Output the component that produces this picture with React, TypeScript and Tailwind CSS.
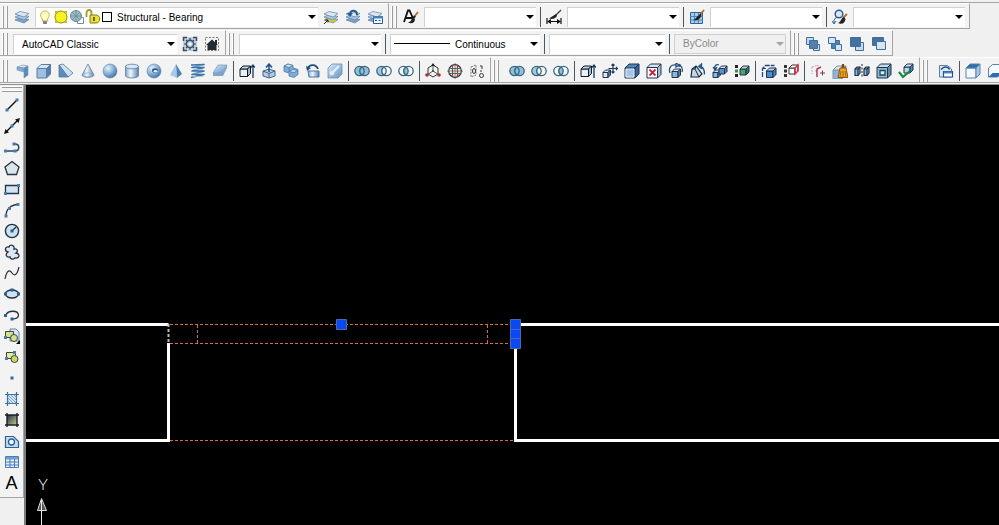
import type { ReactNode } from "react";
import clsx from "clsx";

const NAVY = "#1f3552";
const STEEL = "#4f7ba8";

interface BoxProps {
  x: number;
  y: number;
  s: number;
  d: number;
  front?: string;
  top?: string;
  side?: string;
  stroke?: string;
}

// box in cabinet projection, s = face size, d = depth
const Box = ({
  x,
  y,
  s,
  d,
  front = "#8fb4da",
  top = "#d5e5f4",
  side = "#5580ad",
  stroke = NAVY,
}: BoxProps) => (
  <g stroke={stroke} strokeLinejoin="round">
    <path d={`M${x} ${y + d}h${s}v${s}h${-s}z`} fill={front} />
    <path d={`M${x} ${y + d}l${d} ${-d}h${s}l${-d} ${d}z`} fill={top} />
    <path d={`M${x + s} ${y + d}l${d} ${-d}v${s}l${-d} ${d}z`} fill={side} />
  </g>
);

const Rings = ({ left, mid, right }: { left: string; mid: string; right: string }) => (
  <g stroke="#39677f" strokeWidth="1.3">
    <circle cx="5.5" cy="8" r="4.7" fill={left} />
    <circle cx="10.5" cy="8" r="4.7" fill={right} />
    <path d="M8 4a4.7 4.7 0 0 1 0 8a4.7 4.7 0 0 1 0-8z" fill={mid} />
  </g>
);

const Sheets = ({ last = "#7da2c8" }: { last?: string }) => (
  <g stroke="#5d81a6" strokeWidth=".7">
    <path d="M1 11l5-2.5 9 2-5 3.5z" fill={last} />
    <path d="M1 8l5-2.5 9 2-5 3.5z" fill="#a9c4de" />
    <path d="M1 5l5-2.5 9 2-5 3.5z" fill="#dbe8f4" />
  </g>
);

const Brush = () => (
  <>
    <path d="M15 3L11 8" stroke="#b06a35" strokeWidth="1.8" />
    <path d="M12 7l-2 2.5" stroke="#222" strokeWidth="2.2" />
    <path d="M10 8.500c-2 1-1 4-5 5c3 1.500 7 .5 7-3z" fill="#222" />
  </>
);

const icons: Record<string, ReactNode> = {
  layers: <Sheets />,
  makeCurrent: (
    <>
      <Sheets last="#d8cf32" />
      <path d="M1 15l4-4M2.500 11H5v2.500" stroke="#222" />
    </>
  ),
  layerPrevious: (
    <>
      <Sheets />
      <path d="M12 6C12 1 6 0 5 5" stroke="#275f96" strokeWidth="2" />
      <path d="M2 4h6L5 8z" fill="#275f96" />
    </>
  ),
  layerStates: (
    <>
      <Sheets />
      <path d="M6.500 7.500h9v7h-9z" fill="#fff" stroke="#245b94" />
      <path d="M6 7h10v2.500H6z" fill="#3f7fc0" />
      <path d="M8 11.500h2M11.500 11.500h2" stroke="#245b94" />
    </>
  ),
  textStyle: (
    <>
      <path d="M1 13L5 1.500h1.500l4 9M2.500 9H9" stroke="#111" strokeWidth="1.800" />
      <Brush />
    </>
  ),
  dimStyle: (
    <>
      <path d="M1 9v6M15 9v6M2 12.500h12" stroke="#111" strokeWidth="1.2" />
      <path d="M5 10v5l-4-2.500zM11 10v5l4-2.500z" fill="#111" />
      <path d="M15 1L9 7" stroke="#444" strokeWidth="1.500" />
      <path d="M10 5L3 9.500c3 1 6 .5 8-2.500z" fill="#222" />
    </>
  ),
  tableStyle: (
    <>
      <path d="M1.500 3.500h12v11h-12z" fill="#a9cbea" stroke="#2d62a0" />
      <path d="M1 7.500h13M1 11h13M5.500 4v10M9.500 4v10" stroke="#4e82bb" />
      <path d="M15 1l-4 5" stroke="#b06a35" strokeWidth="1.800" />
      <path d="M11.500 4.500L9 7c-2 1-2 3-4.500 4c4 1 7-1 8-5z" fill="#222" />
    </>
  ),
  leaderStyle: (
    <>
      <circle cx="7" cy="5" r="3.800" fill="#d8e8f7" stroke="#2e5f94" strokeWidth="1.500" />
      <path d="M4.500 8L2 11v3M0 12l2 3 2-3" stroke="#2e5f94" />
      <path d="M15 5l-4 4" stroke="#b06a35" strokeWidth="1.800" />
      <path d="M12 8c-3 1-3 5-6 6c4 2 7 0 7.500-4z" fill="#222" />
    </>
  ),
  workspaceSettings: (
    <>
      <path d="M1 1h14v14H1z" fill="#c3d0dc" />
      <path d="M1.500 5V1.500H5M11 1.500h3.500V5M14.500 11v3.500H11M5 14.500H1.500V11" stroke="#3b4c5d" strokeWidth="1.500" />
      <circle cx="8" cy="8" r="3.700" fill="#b8cad9" stroke="#3b5068" strokeWidth="1.400" />
      <path d="M8 2v3M8 11v3M2 8h3M11 8h3M4 4l2 2M10 10l2 2M12 4l-2 2M6 10l-2 2" stroke="#3b5068" strokeWidth="1.200" />
      <circle cx="8" cy="8" r="1.500" fill="#fff" />
    </>
  ),
  myWorkspace: (
    <>
      <path d="M1.500 1.500h13v13h-13z" stroke="#777" strokeDasharray="2 1.500" />
      <path d="M2 9l6-5.500L14 9h-1.500v5h-9V9z" fill="#252b33" />
      <path d="M11 4h2v4h-2z" fill="#252b33" />
    </>
  ),
  bringFront: (
    <g stroke="#3f6f9e">
      <path d="M1.500 1.500h7v7h-7zM8.500 8.500h6v6h-6z" fill="#c6daec" />
      <path d="M4.500 4.500h8v8h-8z" fill="#527fab" />
    </g>
  ),
  sendBack: (
    <g stroke="#3f6f9e">
      <path d="M4.500 4.500h8v8h-8z" fill="#527fab" />
      <path d="M1.500 1.500h7v6h-7zM8.500 8.500h6v6h-6z" fill="#d6e5f3" />
    </g>
  ),
  bringAbove: (
    <g stroke="#3f6f9e">
      <path d="M6.500 6.500h8v8h-8z" fill="#c6daec" />
      <path d="M1.500 1.500h10v9h-10z" fill="#44719f" />
    </g>
  ),
  sendUnder: (
    <g stroke="#3f6f9e">
      <path d="M1.500 1.500h11v8h-11z" fill="#44719f" />
      <path d="M5.500 5.500h9v8h-9z" fill="#d6e5f3" />
    </g>
  ),
  polysolid: (
    <g stroke="#6f94ba" strokeWidth=".6">
      <path d="M3 4l6-2 5 1-4 2z" fill="#dbe8f4" />
      <path d="M3 4l7 1v4L8 8.500 3 7z" fill="#83aad2" />
      <path d="M10 5l4-2v9l-4 3z" fill="#5a8aba" />
    </g>
  ),
  box: <Box x={1} y={1.5} s={9.5} d={4} front="#9dbfe2" stroke="#5b7d9f" />,
  wedge: (
    <g stroke="#56789a" strokeWidth=".8">
      <path d="M1 2l4-1 10 9-5 4z" fill="#cfe0f0" />
      <path d="M1 2l9 12H1z" fill="#5c8dc0" />
    </g>
  ),
  cone: (
    <>
      <path d="M8 1l6 11c-1 3-11 3-12 0z" fill="url(#metal)" stroke="#697c90" strokeWidth=".8" />
      <ellipse cx="8" cy="12" rx="6" ry="2" stroke="#8aa0b6" strokeWidth=".6" />
    </>
  ),
  sphere: <circle cx="8" cy="8" r="7" fill="url(#ball)" stroke="#5d83ab" strokeWidth=".6" />,
  cylinder: (
    <>
      <path d="M1.500 3v10c1 2.500 12 2.500 13 0V3z" fill="url(#metal)" stroke="#587ca3" strokeWidth=".8" />
      <ellipse cx="8" cy="3.500" rx="6.500" ry="2.300" fill="#d9e8f6" stroke="#587ca3" strokeWidth=".8" />
    </>
  ),
  torus: (
    <>
      <circle cx="8" cy="8" r="7" fill="url(#ball)" stroke="#5d83ab" strokeWidth=".6" />
      <ellipse cx="9" cy="7.500" rx="3" ry="2.300" fill="#2f5884" />
      <ellipse cx="9.500" cy="8.300" rx="2" ry="1.300" fill="#dfeaf5" />
    </>
  ),
  pyramid: (
    <>
      <path d="M8 1L2 12l7 3z" fill="#a9c9e9" />
      <path d="M8 1l6 10-5 4z" fill="#4d82b9" />
    </>
  ),
  helix: (
    <>
      <path d="M1 2l13-.5-12 3 12 0-12 3.500 12 0-12 3.500 12 0L1 14.500" stroke="#3f74a9" strokeWidth="1.700" strokeLinejoin="round" />
      <path d="M3 3h10M3 6.500h10M3 10h10M3 13.500h10" stroke="#a9c8e5" strokeWidth=".8" />
    </>
  ),
  planar: (
    <>
      <path d="M6 2h9l-4 8H1z" fill="url(#sheen)" stroke="#7595b5" strokeWidth=".7" />
      <path d="M1 10h10v3H1zM11 10l4-8v3l-4 8z" fill="#7fa3c9" />
    </>
  ),
  extrude: (
    <>
      <Box x={1} y={3} s={7.5} d={3} front="#e8f0f8" top="#bcd1e5" side="#9ab9d7" stroke="#111c29" />
      <path d="M14 15V2M12 4.500L14 2l2 2.500" stroke="#183b62" strokeWidth="1.300" />
    </>
  ),
  presspull: (
    <>
      <path d="M2 8l6-2 6 2v5l-6 2-6-2z" fill="#b5cce2" stroke="#3f658c" />
      <path d="M2 8l6 2.500L14 8M8 10.500V15" stroke="#3f658c" />
      <path d="M8 9V2M5 4.500L8 1l3 3.500" stroke="#1f4f84" strokeWidth="1.500" />
    </>
  ),
  sweep: (
    <g stroke="#4d7aa8" strokeWidth=".8">
      <path d="M1 3l4-2 5 1.500v2.500l5 1.500v5l-4 3-5-1.500V10L1 8.500z" fill="#7fabd8" />
      <path d="M1 3l4-2 5 1.500-4 2zM6 8.500l4-2 5 1-4 2z" fill="#d3e4f4" />
      <path d="M6 4.500V9" />
    </g>
  ),
  revolve: (
    <>
      <path d="M3 8h11v6H4z" fill="url(#metal)" stroke="#4d7aa8" />
      <path d="M13 6C11 1 5 1 3 5" stroke="#204d7d" strokeWidth="1.800" />
      <path d="M1 3l1 5 4-3z" fill="#204d7d" />
    </>
  ),
  loft: (
    <>
      <path d="M1 5l4-4h10v10l-4 4H1z" fill="url(#sheen)" stroke="#6991b9" strokeWidth=".8" />
      <path d="M6 9l6-6" stroke="#e9f3fc" strokeWidth="2" />
      <circle cx="5" cy="10" r="2.300" fill="#e2eef9" />
    </>
  ),
  union: <Rings left="#8fc1dc" mid="#8fc1dc" right="#8fc1dc" />,
  subtract: <Rings left="#9fcbe2" mid="#f4f7fa" right="#f4f7fa" />,
  intersect: <Rings left="#f4f7fa" mid="#8fc1dc" right="#f4f7fa" />,
  gizmoMove: (
    <>
      <path d="M3 5l5-3 5 3v6l-5 3-5-3z" stroke="#333" />
      <path d="M8 8V1M8 8l-6 4M8 8l6 4" stroke="#555" />
      <path d="M8 0l2 3H6z" fill="#222" />
      <circle cx="2" cy="12" r="1.800" fill="#a33" />
      <circle cx="14" cy="12" r="1.800" fill="#a33" />
      <path d="M7 7h2v2H7z" fill="#2f6b3c" />
    </>
  ),
  gizmoRotate: (
    <>
      <circle cx="8" cy="8" r="6.300" stroke="#333" strokeWidth="1.200" />
      <path d="M5.500 2.500v11M10.500 2.500v11" stroke="#a43b44" strokeWidth="1.200" />
      <path d="M2.500 5.500h11M2.500 10.500h11" stroke="#3e7450" strokeWidth="1.200" />
      <path d="M8 0v16M0 8h16" stroke="#555" strokeWidth=".7" />
    </>
  ),
  align3d: (
    <>
      <path d="M2 4l5-2v10l-5 2z" stroke="#777" strokeDasharray="2 1" />
      <ellipse cx="5" cy="8" rx="1.500" ry="2.500" stroke="#333" />
      <path d="M11 3h2v3M11 8h2" stroke="#333" />
      <circle cx="12.500" cy="12.500" r="2" stroke="#333" />
    </>
  ),
  moveFaces: (
    <>
      <Box x={1} y={7} s={5} d={2.5} front="#dce8f4" />
      <path d="M11 1v9M6.500 5.500h9M9.500 2.500L11 1l1.500 1.500M9.500 8.500L11 10l1.500-1.500M14 4l1.500 1.500L14 7" stroke="#1d3a5c" strokeWidth="1.200" />
    </>
  ),
  offsetFaces: (
    <>
      <Box x={1} y={1} s={10} d={4} front="#a5c4e4" top="#4f86bd" side="#35659a" />
      <path d="M2 6h8v8H2z" stroke="#e3eef8" />
    </>
  ),
  deleteFaces: (
    <>
      <Box x={1} y={1} s={10.5} d={3.5} front="#fff" top="#d8e3ee" side="#a7bdd3" />
      <path d="M3.500 6.500l6 6M9.500 6.500l-6 6" stroke="#c5283d" strokeWidth="1.800" />
    </>
  ),
  rotateFaces: (
    <>
      <Box x={4} y={6} s={6} d={2.5} />
      <path d="M2 10C0 4 4 1 8 2M14 9c1-3 0-5-2-7M8 0v4l3-2zM12 1l-1 3" stroke="#24507e" strokeWidth="1.300" />
    </>
  ),
  taperFaces: (
    <>
      <path d="M1 14l1-8 4-3 6 8-3 3z" fill="#c2d7eb" stroke="#17283c" strokeWidth="1.200" />
      <path d="M2 6l3 0 4 8M5 6l1-3" stroke="#17283c" />
      <path d="M9.500 3.500c3 0 5 3 5 8M8.500 3.500l3-2.500v4.500z" stroke="#285887" strokeWidth="1.400" />
    </>
  ),
  copyFaces: (
    <>
      <Box x={1} y={7} s={5} d={2.5} />
      <Box x={7} y={3} s={5.5} d={2.5} front="#5f91c4" />
      <path d="M7 2C4 1 2 3 3 6M1 4l2 3 2-3" stroke="#1d4a7a" strokeWidth="1.300" />
    </>
  ),
  colorFaces: (
    <>
      <path d="M1 2h3v3H1z" fill="#222" />
      <path d="M1 6.500h3v3H1z" fill="#3c8a4e" />
      <path d="M1 11h3v3H1z" fill="#222" />
      <Box x={6} y={3} s={6} d={3} front="#4da568" top="#bcdcc5" side="#2e7a48" />
    </>
  ),
  copyEdges: (
    <>
      <Box x={5.5} y={5} s={6.5} d={3} front="#4b8ccc" top="#bed7ef" />
      <path d="M1.500 14V5.500l3-3h9" stroke="#1b4a80" strokeDasharray="5 1" strokeWidth="1.300" />
      <path d="M1 5.500h4" stroke="#1b4a80" />
    </>
  ),
  colorEdges: (
    <>
      <path d="M1 2h3v3H1zM1 6.500h3v3H1zM1 11h3v3H1z" fill="#333" />
      <Box x={6} y={2} s={6} d={3} front="#fff" top="#fff" side="#fbe3e6" stroke="#333" />
      <path d="M12 5v6l3-3V2z" stroke="#d0334a" strokeWidth="1.400" />
    </>
  ),
  imprint: (
    <>
      <path d="M2 4l6-2v4M2 4v7M5 8h3" stroke="#c9a5b4" strokeDasharray="2 1" />
      <path d="M7 14V6l4-2" stroke="#a93a5c" strokeWidth="1.500" />
      <path d="M10 10h5M12.500 7.500v5" stroke="#7a3c55" />
    </>
  ),
  clean: (
    <>
      <Box x={1} y={3} s={9} d={4} stroke="#7d93aa" />
      <path d="M10 1h2l.5 4h-3z" fill="#7a4a12" />
      <path d="M8 5h6l2 9.500H6z" fill="#efa528" stroke="#91560e" />
      <path d="M9 8l-1 6M11 8v6M13 8l1 6" stroke="#a8650f" />
    </>
  ),
  separate: (
    <>
      <g stroke={NAVY} strokeWidth="1.200">
        <path d="M1 6l2-2h3v6l-2 2.500H1z" fill="#8fb4cc" />
        <path d="M1 6h3v6.500M4 6l2-2" />
        <path d="M10 6l2-2h3v6l-2 2.500h-3z" fill="#8fb4cc" />
        <path d="M10 6h3v6.500M13 6l2-2" />
      </g>
      <path d="M8 1v14" stroke="#222" strokeDasharray="2 1.500" />
    </>
  ),
  shell: (
    <>
      <Box x={1} y={1} s={10.5} d={3.5} front="#93b9ce" top="#c4dce8" side="#5f8ba4" />
      <path d="M4 7.500h5v4.500H4z" fill="#dcebf3" stroke="#1f4860" strokeWidth="1.300" />
    </>
  ),
  check: (
    <>
      <Box x={6} y={1} s={6} d={3} front="#b7d5e2" />
      <path d="M1 9l4 5 7-6" stroke="#158a3e" strokeWidth="2.200" />
    </>
  ),
  namedViews: (
    <>
      <path d="M1.500 14V2.500h8l4 3.500v8z" fill="#dce8f3" stroke="#5b7da0" />
      <path d="M3 6.500C6 3 10 3 11.500 6.500" stroke="#24507e" strokeWidth="1.500" />
      <path d="M5.500 8.500h9v5.500h-9z" fill="#fff" stroke="#1d5793" strokeWidth="1.200" />
      <path d="M6 8.500h8v2H6z" fill="#4b86c0" />
    </>
  ),
  topView: <Box x={1} y={1} s={10} d={4} front="#f5f9fc" top="#2d6db0" side="#a8c7e6" stroke="#5a83ac" />,
  bottomView: (
    <>
      <path d="M1.500 5l4-3.500h9V10l-4 4h-9z" fill="#f5f9fc" stroke="#5a83ac" />
      <path d="M1.500 14l4-4h9l-4 4z" fill="#2d6db0" />
    </>
  ),
  line: (
    <>
      <path d="M3 13L13 3" stroke="#111" strokeWidth="1.400" />
      <path d="M1.500 11.500h3v3h-3zM11.500 1.500h3v3h-3z" fill={STEEL} />
    </>
  ),
  xline: (
    <>
      <path d="M2 14L14 2" stroke="#111" strokeWidth="1.400" />
      <path d="M0 16l1.500-5L5 14.500zM16 0l-5 1.500L14.500 5z" fill="#111" />
      <path d="M6.500 6.500h3v3h-3z" fill={STEEL} />
    </>
  ),
  pline: (
    <>
      <path d="M2 12h9c5 0 5-7 0-7" stroke="#24476d" strokeWidth="1.500" />
      <path d="M0 10.500h3v3H0zM9.500 10.500h3v3h-3zM8.500 3.500h3v3h-3z" fill={STEEL} />
    </>
  ),
  polygon: <path d="M8 1.500L15 7l-2.500 7.500h-9L1 7z" fill="#d9e7ec" stroke="#28333f" strokeWidth="1.300" />,
  rectangle: (
    <>
      <path d="M1.500 4.500h13v8h-13z" fill="#d3e3f0" stroke="#1f3552" strokeWidth="1.300" />
      <path d="M0 11h3v3H0zM13 3h3v3h-3z" fill={STEEL} />
    </>
  ),
  arc: (
    <>
      <path d="M2 14C2 7 7 3 14 2.500" stroke="#222f3f" strokeWidth="1.300" />
      <path d="M.5 12.500h3v3h-3zM4 5h3v3H4zM12.500 1h3v3h-3z" fill={STEEL} />
    </>
  ),
  circle: (
    <>
      <circle cx="8" cy="8" r="6.600" fill="#cbe2f5" stroke="#26313d" strokeWidth="1.400" />
      <path d="M8 8l4-4" stroke="#26313d" strokeWidth="1.200" />
      <path d="M6.500 6.500h3v3h-3z" fill="#24609a" />
    </>
  ),
  revcloud: (
    <path
      d="M4 8C0 7 1 2 5 3c1-3 6-2 5 2 4-1 4 3 2 4 5 1 3 6-1 5-2 2-5 1-5-1-4 1-5-3-2-5z"
      fill="#dbe8f2"
      stroke="#28333f"
      strokeWidth="1.300"
    />
  ),
  spline: <path d="M1 14C3 4 6 5 8 8s5 3 7-6" stroke="#28333f" strokeWidth="1.200" />,
  ellipse: (
    <>
      <ellipse cx="8" cy="8" rx="6.500" ry="4" fill="#cbe2f5" stroke="#26313d" strokeWidth="1.300" />
      <path d="M0 6.500h3v3H0zM13 6.500h3v3h-3zM6.500 2.500h3v3h-3z" fill="#2b5f94" />
    </>
  ),
  ellipseArc: (
    <>
      <path d="M2 8c2-5 12-5 12.500 0 0 3-3 4-6.500 4" stroke="#26313d" strokeWidth="1.300" />
      <path d="M0 7h3v3H0zM6.500 10.500h3v3h-3z" fill="#2b5f94" />
    </>
  ),
  insert: (
    <>
      <path d="M6 1h6l3 3v9H6z" fill="#d9e7f5" stroke="#5d87b1" />
      <path d="M1.500 3.500h8v6h-8z" fill="#d5df8c" stroke="#3a4a3a" />
      <circle cx="10" cy="10" r="3.500" fill="#d5df8c" stroke="#3a4a3a" />
      <path d="M0 8h3v3H0z" fill={STEEL} />
      <path d="M16 12v4h-4z" fill="#000" />
    </>
  ),
  makeBlock: (
    <>
      <path d="M2.500 3.500h9v6h-9z" fill="#e0e7a8" stroke="#3a4a3a" />
      <circle cx="10.500" cy="10" r="3.500" fill="#c9d567" stroke="#3a4a3a" />
      <path d="M1 8h3v3H1zM9 2h3v3H9z" fill={STEEL} />
    </>
  ),
  point: <path d="M6.500 6.500h3v3h-3z" fill="#386590" />,
  hatch: (
    <>
      <path d="M3.500 3.500h9v9h-9z" fill="#d8e7f5" />
      <path d="M3.500 1v14M12.500 1v14M1 3.500h14M1 12.500h14" stroke="#356b9f" strokeWidth="1.200" />
      <path d="M3 9l4 4M3 6l7 7M3 3l10 10M6 3l7 7M9 3l4 4" stroke="#5b8bb8" strokeWidth=".8" />
    </>
  ),
  gradient: (
    <>
      <path d="M3 3h10v10H3z" fill="url(#dusk)" />
      <path d="M3 1v14M13 1v14M1 3h14M1 13h14" stroke="#16202b" strokeWidth="1.400" />
    </>
  ),
  region: (
    <>
      <path d="M1.500 3.500h8l5 5v6h-13z" fill="#c2dcf3" stroke="#2f6294" strokeWidth="1.200" />
      <circle cx="7.500" cy="9" r="3" fill="#f2f7fb" stroke="#2f6294" strokeWidth="1.300" />
    </>
  ),
  table: (
    <>
      <path d="M1.500 2.500h13v11h-13z" fill="#e4eff9" stroke="#4b7db4" />
      <path d="M2 3h12v2.500H2z" fill="#6f9fd2" />
      <path d="M1 8h14M1 11h14M6 5v9M10.500 5v9" stroke="#4b7db4" />
    </>
  ),
  bulb: (
    <>
      <path d="M5.500 10C2 7 4 2 8 2s6 5 2.500 8v2h-5z" fill="#ffffc4" stroke="#c6b33a" />
      <path d="M6 12h4v3H6z" fill="#7f868e" />
    </>
  ),
  sun: (
    <>
      <path d="M2 2h3L2 5zM14 2v3l-3-3zM2 14v-3l3 3zM14 14h-3l3-3z" fill="#c8b91e" />
      <circle cx="8" cy="8" r="6" fill="#f7f11c" stroke="#93891b" />
    </>
  ),
  viewport: (
    <>
      <path d="M8.500 8.500h6v6h-6z" fill="#fff" stroke="#758aa0" />
      <circle cx="7" cy="7" r="5.500" fill="#9dbfc6" stroke="#678b98" />
      <path d="M7 1v12M1 7h12M3 3l8 8M11 3l-8 8" stroke="#678b98" strokeWidth=".8" />
    </>
  ),
  lock: (
    <>
      <path d="M1.500 8V4c0-4 5-4 5 0v3" stroke="#a39a26" strokeWidth="1.800" />
      <path d="M5 6h6c5 0 5 8 0 8H5z" fill="#e9e231" stroke="#837a1b" />
      <path d="M8 8h2v4H8z" fill="#6f671a" />
    </>
  ),
};

const Icon = ({ name }: { name: string }) => (
  <svg viewBox="0 0 16 16" className="size-4 shrink-0" fill="none" aria-hidden="true">
    {icons[name]}
  </svg>
);

const ToolButton = ({ name, tall }: { name: string; tall?: boolean }) => (
  <button
    type="button"
    aria-label={name}
    className={clsx(
      "flex w-[22px] shrink-0 items-center justify-center hover:bg-sky-100",
      tall ? "h-[21px]" : "h-5"
    )}
  >
    <Icon name={name} />
  </button>
);

const Sep = () => <div className="mx-[2px] h-5 w-px shrink-0 bg-gray-600" />;

const Grip = () => (
  <div className="flex h-[22px] w-[11px] shrink-0 gap-[2px] pl-[2px]">
    <div className="w-[2px] border-r border-[#9a9a9a] bg-white" />
    <div className="w-[2px] border-r border-[#9a9a9a] bg-white" />
  </div>
);

const Toolbar = ({ label, children }: { label: string; children: ReactNode }) => (
  <div
    role="toolbar"
    aria-label={label}
    className="flex h-[26px] shrink-0 items-center border-t border-r border-b border-t-white border-r-[#a5a5a5] border-b-[#a5a5a5] bg-[#f3f3f3] pt-[2px] pr-[2px]"
  >
    <Grip />
    {children}
  </div>
);

interface ComboProps {
  label: string;
  value?: string;
  width: string;
  pad?: string;
  disabled?: boolean;
  children?: ReactNode;
}

const Combo = ({ label, value = "", width, pad = "pl-2", disabled, children }: ComboProps) => (
  <div className={clsx("relative mx-[2px] h-5 shrink-0", width)}>
    <select
      aria-label={label}
      disabled={disabled}
      className={clsx(
        "block h-full w-full appearance-none border-t border-l border-[#d0d0d0] pr-4 text-[10px] leading-4 outline-none",
        pad,
        disabled ? "border-r border-b border-[#bdbdbd] bg-[#f0f0f0] text-[#8a8a8a] opacity-100" : "bg-white text-black"
      )}
    >
      <option>{value}</option>
    </select>
    {children}
    <svg
      viewBox="0 0 8 4"
      className={clsx("pointer-events-none absolute top-2 right-[2px] h-1 w-2", disabled ? "fill-[#a5a5a5]" : "fill-black")}
      aria-hidden="true"
    >
      <path d="M0 0h8L4 4z" />
    </svg>
  </div>
);

const Tools = ({ names }: { names: string[] }) => (
  <>
    {names.map((n) => (
      <ToolButton key={n} name={n} />
    ))}
  </>
);

const drawTools = [
  "line",
  "xline",
  "pline",
  "polygon",
  "rectangle",
  "arc",
  "circle",
  "revcloud",
  "spline",
  "ellipse",
  "ellipseArc",
  "insert",
  "makeBlock",
  "point",
  "hatch",
  "gradient",
  "region",
  "table",
];

const Gradients = () => (
  <svg className="absolute size-0" aria-hidden="true">
    <defs>
      <linearGradient id="metal">
        <stop offset="0" stopColor="#7ea4cb" />
        <stop offset=".4" stopColor="#f0f6fc" />
        <stop offset="1" stopColor="#5882ae" />
      </linearGradient>
      <radialGradient id="ball" cx=".35" cy=".3" r=".75">
        <stop offset="0" stopColor="#e6f1fb" />
        <stop offset=".5" stopColor="#8fb5dc" />
        <stop offset="1" stopColor="#3f6fa3" />
      </radialGradient>
      <linearGradient id="sheen" x1="0" y1="0" x2="1" y2="1">
        <stop offset="0" stopColor="#dcebf8" />
        <stop offset="1" stopColor="#5f91c4" />
      </linearGradient>
      <linearGradient id="dusk" x1="0" y1="0" x2="1" y2="1">
        <stop offset="0" stopColor="#202c44" />
        <stop offset="1" stopColor="#c6cf8f" />
      </linearGradient>
    </defs>
  </svg>
);

const Drawing = () => (
  <svg className="block h-full w-full" fill="none" role="img" aria-label="Model space">
    <g stroke="#fff" strokeWidth="3">
      <path d="M0 239.5h142.500M142.500 258v99M0 355.500h144" />
      <path d="M489.500 238v119" />
      <line x1="489" y1="239.500" x2="100%" y2="239.500" />
      <line x1="489" y1="355.500" x2="100%" y2="355.500" />
    </g>
    <path d="M142.500 239v20" stroke="#bbb" strokeWidth="2" strokeDasharray="3 2" />
    <g stroke="#d2703f" strokeDasharray="3 2">
      <path d="M144 239.500h342M144 258.500h342M144 355.500h344" />
      <path d="M171.500 240v18M461.500 240v18" />
    </g>
    <g fill="#0a48f5" stroke="#4a6aa8">
      <path d="M310.500 234.500h10v10h-10z" />
      <path d="M484.500 234.500h10v10h-10zM484.500 244.500h10v9h-10zM484.500 253.500h10v10h-10z" />
    </g>
    {/* UCS icon */}
    <text x="17" y="405" textAnchor="middle" className="fill-white font-['Lato'] text-base font-light">
      Y
    </text>
    <path d="M15.500 413.500l-4 12h9z" fill="#555" stroke="#ddd" />
    <line x1="15.500" y1="415" x2="15.500" y2="100%" stroke="#eee" />
  </svg>
);

const App = () => {
  return (
    <div className="flex h-screen flex-col overflow-hidden bg-[#f0f0f0] font-['Liberation_Sans',sans-serif]">
      <Gradients />
      <header className="shrink-0 border-b border-[#8c8c8c] bg-[#f0f0f0]">
        <div className="h-[3px] border-b border-[#a5a5a5]" />
        <div className="flex h-[27px]">
          <Toolbar label="Layers">
            <ToolButton name="layers" />
            <Combo label="Layer" value="Structural - Bearing" width="w-[283px]" pad="pl-[81px]">
              <div className="pointer-events-none absolute top-[2px] left-[2px] flex items-center">
                <Icon name="bulb" />
                <Icon name="sun" />
                <Icon name="viewport" />
                <Icon name="lock" />
                <div className="ml-px size-[10px] border border-black bg-white" />
              </div>
            </Combo>
            <Tools names={["makeCurrent", "layerPrevious", "layerStates"]} />
          </Toolbar>
          <Toolbar label="Styles">
            <ToolButton name="textStyle" />
            <Combo label="Text style" width="w-[112px]" />
            <Sep />
            <ToolButton name="dimStyle" />
            <Combo label="Dimension style" width="w-[112px]" />
            <Sep />
            <ToolButton name="tableStyle" />
            <Combo label="Table style" width="w-[112px]" />
            <Sep />
            <ToolButton name="leaderStyle" />
            <Combo label="Multileader style" width="w-[112px]" />
          </Toolbar>
        </div>
        <div className="flex h-[27px]">
          <Toolbar label="Workspaces">
            <Combo label="Workspace" value="AutoCAD Classic" width="w-[164px]" />
            <Tools names={["workspaceSettings", "myWorkspace"]} />
          </Toolbar>
          <Toolbar label="Properties">
            <Combo label="Color" width="w-[142px]" />
            <Sep />
            <Combo label="Linetype" value="Continuous" width="w-[150px]" pad="pl-[64px]">
              <div className="pointer-events-none absolute top-[9px] left-1 h-px w-14 bg-black" />
            </Combo>
            <Sep />
            <Combo label="Lineweight" width="w-[116px]" />
            <Sep />
            <Combo label="Plot style" value="ByColor" width="w-[112px]" disabled />
          </Toolbar>
          <Toolbar label="Draw order">
            <Tools names={["bringFront", "sendBack", "bringAbove", "sendUnder"]} />
          </Toolbar>
        </div>
        <div className="flex h-[27px]">
          <Toolbar label="Modeling">
            <Tools
              names={["polysolid", "box", "wedge", "cone", "sphere", "cylinder", "torus", "pyramid", "helix", "planar"]}
            />
            <Sep />
            <Tools names={["extrude", "presspull", "sweep", "revolve", "loft"]} />
            <Sep />
            <Tools names={["union", "subtract", "intersect"]} />
            <Sep />
            <Tools names={["gizmoMove", "gizmoRotate", "align3d"]} />
          </Toolbar>
          <Toolbar label="Solid editing">
            <div className="w-1 shrink-0" />
            <Tools names={["union", "subtract", "intersect"]} />
            <Sep />
            <Tools
              names={[
                "extrude",
                "moveFaces",
                "offsetFaces",
                "deleteFaces",
                "rotateFaces",
                "taperFaces",
                "copyFaces",
                "colorFaces",
              ]}
            />
            <Sep />
            <Tools names={["copyEdges", "colorEdges"]} />
            <Sep />
            <Tools names={["imprint", "clean", "separate", "shell", "check"]} />
          </Toolbar>
          <Toolbar label="View">
            <div className="w-1 shrink-0" />
            <ToolButton name="namedViews" />
            <Sep />
            <Tools names={["topView", "bottomView"]} />
          </Toolbar>
        </div>
      </header>
      <main className="flex min-h-0 flex-1">
        <aside className="w-6 shrink-0">
          <div
            role="toolbar"
            aria-label="Draw"
            className="flex flex-col items-center border-r border-b border-[#a5a5a5] bg-[#f3f3f3] pt-px pb-1"
          >
            <div className="mb-[2px] flex h-[6px] w-5 flex-col gap-[2px]">
              <div className="h-[2px] border-b border-[#9a9a9a] bg-white" />
              <div className="h-[2px] border-b border-[#9a9a9a] bg-white" />
            </div>
            {drawTools.map((n) => (
              <ToolButton key={n} name={n} tall />
            ))}
            <button
              type="button"
              aria-label="Multiline text"
              className="h-[21px] w-[22px] text-lg leading-5 text-black"
            >
              A
            </button>
          </div>
        </aside>
        <section className="min-w-0 flex-1 border-l-2 border-[#7d7d7d] bg-black">
          <Drawing />
        </section>
      </main>
    </div>
  );
};

export default App;
